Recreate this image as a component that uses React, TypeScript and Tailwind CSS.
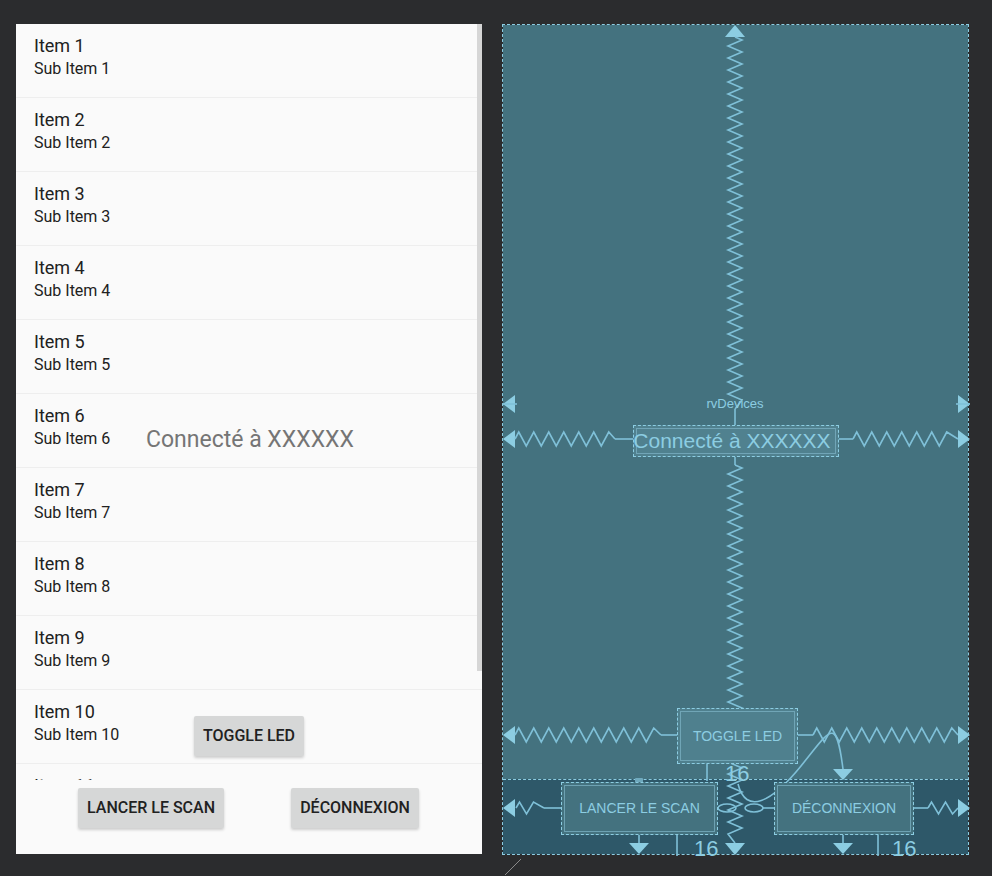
import React from 'react';

const items = Array.from({ length: 11 }, (_, i) => i + 1);

const LINE = '#7fc0d8';
const TEXT = '#8ccde2';

// zigzag helpers for the blueprint springs
function zigV(x: number, y0: number, y1: number, amp = 7, step = 6) {
    let d = `M ${x} ${y0}`;
    let i = 0;
    for (let y = y0 + step / 2; y < y1 - step / 2; y += step) {
        d += ` L ${x + (i % 2 ? -amp : amp)} ${y}`;
        i++;
    }
    return d + ` L ${x} ${y1}`;
}

function zigH(y: number, x0: number, x1: number, amp = 7, step = 7.5) {
    let d = `M ${x0} ${y}`;
    let i = 0;
    const dir = x1 > x0 ? 1 : -1;
    for (let x = x0 + (dir * step) / 2; dir > 0 ? x < x1 - step / 2 : x > x1 + step / 2; x += dir * step) {
        d += ` L ${x} ${y + (i % 2 ? amp : -amp)}`;
        i++;
    }
    return d + ` L ${x1} ${y}`;
}

const arrowLeft = (y: number) => `M 0 ${y} L 12 ${y - 9} L 12 ${y + 9} Z`;
const arrowRight = (y: number) => `M 467 ${y} L 455 ${y - 9} L 455 ${y + 9} Z`;
const arrowDown = (x: number, y: number) => `M ${x - 10} ${y} L ${x + 10} ${y} L ${x} ${y + 11} Z`;

const blueFont = { fontFamily: '"Liberation Sans", Arial, sans-serif' };

const BlueBox: React.FC<{ className: string; label: string; textClass: string }> = ({ className, label, textClass }) => (
    <div className={`absolute border border-dashed border-[#8ccde2] ${className}`}>
        <div className="absolute inset-[2px] border border-[#7fb5c7]/70" />
        <div className={`relative h-full flex items-center justify-center whitespace-nowrap text-[#8ccde2] ${textClass}`} style={blueFont}>
            {label}
        </div>
    </div>
);

const Blueprint: React.FC = () => (
    <div className="relative w-[467px] h-[831px] flex flex-col border border-dashed border-[#8ccde2]">
        <div className="flex-1 bg-[#44727f]" />
        <div className="h-[75px] bg-[#2e5869] border-t border-dashed border-[#8ccde2]" />

        <svg className="absolute inset-0" width="467" height="831" viewBox="0 0 467 831" fill="none">
            {/* vertical spring of the list */}
            <path d="M 222 12 L 232 0 L 242 12 Z" fill={TEXT} />
            <path d={zigV(232, 12, 384)} stroke={LINE} strokeWidth="1.6" />
            <path d="M 232 384 L 232 400" stroke={LINE} strokeWidth="1.6" />
            <path d={arrowLeft(379)} fill={TEXT} />
            <path d="M 0 379 L 14 379" stroke={LINE} strokeWidth="1.6" />
            <path d={arrowRight(379)} fill={TEXT} />
            <path d="M 453 379 L 467 379" stroke={LINE} strokeWidth="1.6" />

            {/* text view springs */}
            <path d={arrowLeft(414)} fill={TEXT} />
            <path d={zigH(414, 12, 112)} stroke={LINE} strokeWidth="1.6" />
            <path d="M 112 414 L 130 414" stroke={LINE} strokeWidth="1.6" />
            <path d="M 336 414 L 350 414" stroke={LINE} strokeWidth="1.6" />
            <path d={zigH(414, 350, 455)} stroke={LINE} strokeWidth="1.6" />
            <path d={arrowRight(414)} fill={TEXT} />
            <path d="M 232 432 L 232 440" stroke={LINE} strokeWidth="1.6" />
            <path d={zigV(232, 440, 818)} stroke={LINE} strokeWidth="1.6" />
            <path d="M 222 818 L 242 818 L 232 830 Z" fill={TEXT} />

            {/* toggle led springs */}
            <path d={arrowLeft(710)} fill={TEXT} />
            <path d={zigH(710, 12, 158)} stroke={LINE} strokeWidth="1.6" />
            <path d="M 158 710 L 174 710" stroke={LINE} strokeWidth="1.6" />
            <path d="M 295 710 L 310 710" stroke={LINE} strokeWidth="1.6" />
            <path d={zigH(710, 310, 455)} stroke={LINE} strokeWidth="1.6" />
            <path d={arrowRight(710)} fill={TEXT} />
            <path d="M 204 739 L 204 756" stroke={LINE} strokeWidth="1.6" />
            <path d="M 235 759 C 243 790, 268 778, 298 741 S 333 690, 340 744" stroke={LINE} strokeWidth="1.6" />
            <path d={arrowDown(340, 744)} fill={TEXT} />

            {/* bottom row */}
            <rect x="132" y="753" width="8" height="7" rx="1" fill="#6fa9bd" />
            <path d={arrowLeft(783)} fill={TEXT} />
            <path d={zigH(783, 13, 41, 6, 7)} stroke={LINE} strokeWidth="1.6" />
            <path d="M 41 783 L 58 783" stroke={LINE} strokeWidth="1.6" />
            <ellipse cx="224" cy="783" rx="9" ry="4" stroke={LINE} strokeWidth="1.6" />
            <ellipse cx="251" cy="783" rx="9" ry="4" stroke={LINE} strokeWidth="1.6" />
            <path d="M 260 783 L 271 783" stroke={LINE} strokeWidth="1.6" />
            <path d="M 411 783 L 425 783" stroke={LINE} strokeWidth="1.6" />
            <path d={zigH(783, 425, 455, 6, 7)} stroke={LINE} strokeWidth="1.6" />
            <path d={arrowRight(783)} fill={TEXT} />
            <path d="M 136 810 L 136 818" stroke={LINE} strokeWidth="1.6" />
            <path d={arrowDown(136, 818)} fill={TEXT} />
            <path d="M 174 810 L 174 831" stroke={LINE} strokeWidth="1.6" />
            <path d="M 340 810 L 340 818" stroke={LINE} strokeWidth="1.6" />
            <path d={arrowDown(340, 818)} fill={TEXT} />
            <path d="M 375 810 L 375 831" stroke={LINE} strokeWidth="1.6" />
        </svg>

        <div className="absolute left-[196px] top-[372px] w-[72px] text-center text-[13px] leading-[14px] text-[#8ccde2]" style={blueFont}>
            rvDevices
        </div>

        <BlueBox className="left-[130px] top-[400px] w-[206px] h-[32px] bg-[#50818f]" label="Connecté à XXXXXX" textClass="text-[21px] -ml-[8px]" />
        <BlueBox className="left-[174px] top-[683px] w-[121px] h-[56px] bg-[#4f808e]" label="TOGGLE LED" textClass="text-[14px]" />
        <BlueBox className="left-[58px] top-[757px] w-[157px] h-[53px] bg-[#44727f]" label="LANCER LE SCAN" textClass="text-[14px]" />
        <BlueBox className="left-[271px] top-[757px] w-[140px] h-[53px] bg-[#44727f]" label="DÉCONNEXION" textClass="text-[14px]" />

        <div className="absolute left-[222px] top-[737px] text-[22px] leading-[24px] text-[#8ccde2]" style={blueFont}>16</div>
        <div className="absolute left-[191px] top-[812px] text-[22px] leading-[24px] text-[#8ccde2]" style={blueFont}>16</div>
        <div className="absolute left-[389px] top-[812px] text-[22px] leading-[24px] text-[#8ccde2]" style={blueFont}>16</div>
    </div>
);

const buttonClass =
    'h-[40px] bg-[#d6d7d7] rounded-[2px] shadow-[0_2px_3px_rgba(0,0,0,0.18)] text-[16px] font-medium text-[#212121]';

const DevicePreview: React.FC = () => (
    <div className="relative w-[466px] h-[830px] bg-[#fafafa] flex flex-col" style={{ fontFamily: 'Roboto, "Noto Sans", sans-serif' }}>
        <div className="relative h-[756px] overflow-hidden">
            {items.map((n) => (
                <div key={n} className="h-[74px] pl-[18px] pt-[10px] border-b border-[#eeeeee]">
                    <div className="text-[18px] leading-[24px] text-[#212121]">Item {n}</div>
                    <div className="text-[16px] leading-[20px] mt-[1px] text-[#212121]">Sub Item {n}</div>
                </div>
            ))}
            <div className="absolute right-0 top-0 w-[5px] h-[647px] bg-[#d6d6d6]" />
        </div>

        <div className="flex-1 flex items-start pt-[8px] pl-[62px] gap-[67px]">
            <button className={`w-[146px] ${buttonClass}`}>LANCER LE SCAN</button>
            <button className={`w-[128px] ${buttonClass}`}>DÉCONNEXION</button>
        </div>

        <div className="absolute left-[130px] top-[400px] w-[230px] h-[32px] flex items-center text-[23px] text-[#757575] whitespace-nowrap">
            Connecté à XXXXXX
        </div>
        <button className={`absolute left-[178px] top-[692px] w-[110px] ${buttonClass}`}>TOGGLE LED</button>
    </div>
);

export default function App() {
    return (
        <div className="relative w-[992px] h-[876px] bg-[#2b2c2e] flex items-start gap-[20px] pl-[16px] pt-[24px]">
            <DevicePreview />
            <Blueprint />
            <svg className="absolute left-[503px] top-[858px]" width="20" height="18" viewBox="0 0 20 18">
                <path d="M 2 17 L 18 1" stroke="#8a8a8a" strokeWidth="1" />
            </svg>
        </div>
    );
}
